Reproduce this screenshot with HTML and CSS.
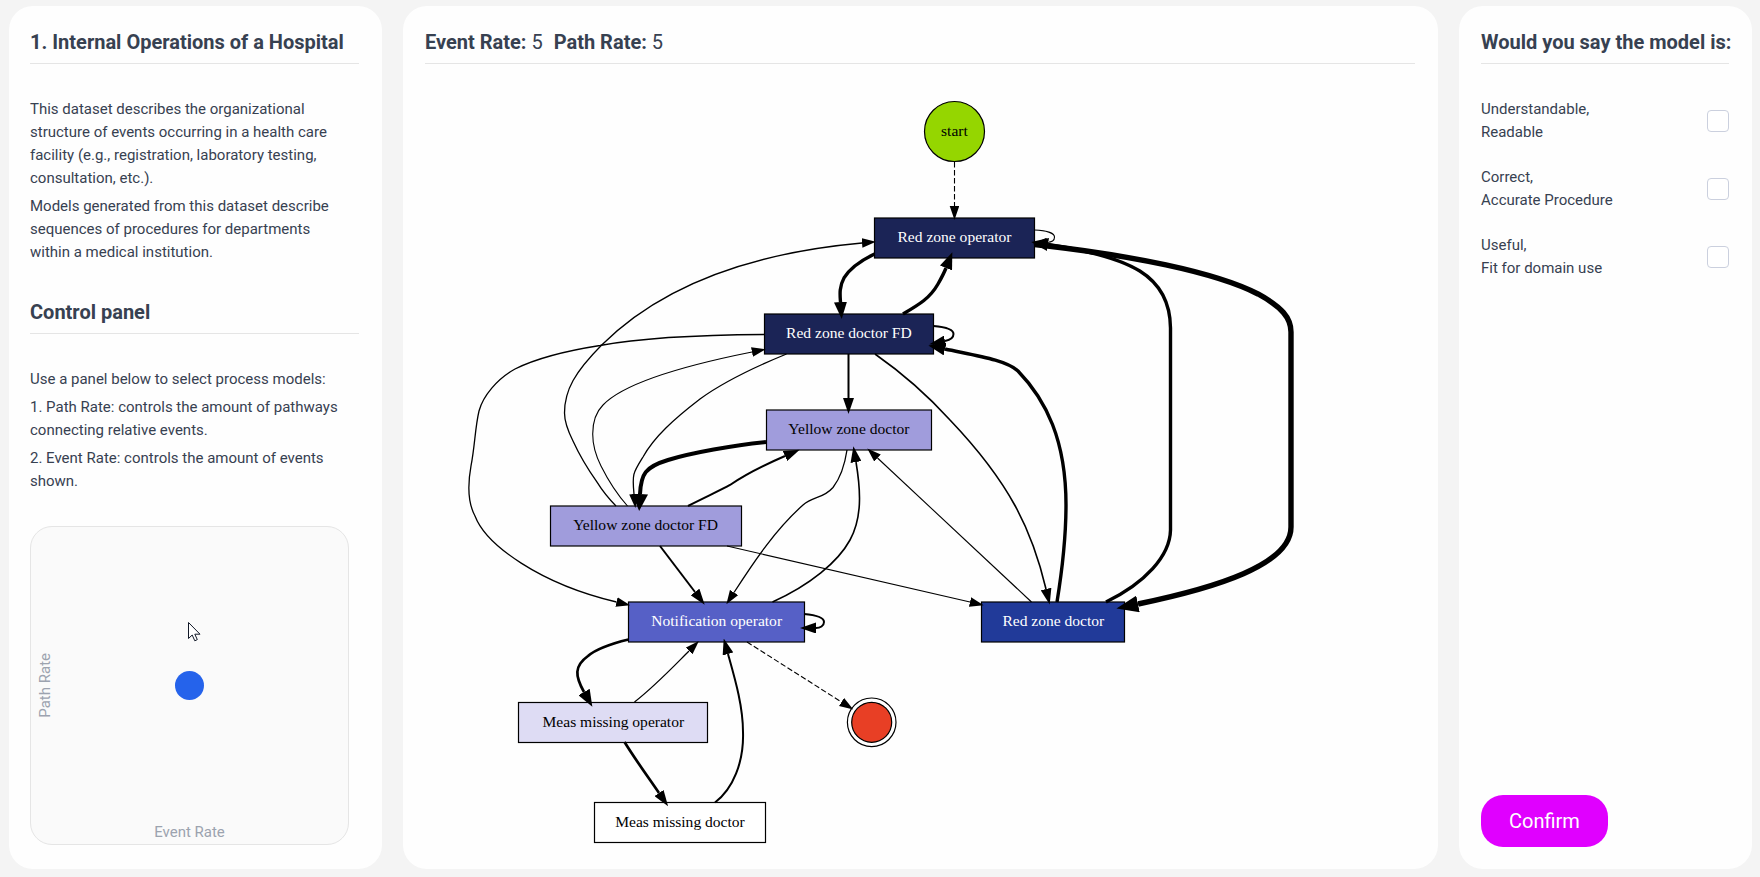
FILE: index.html
```html
<!DOCTYPE html>
<html lang="en">
<head>
<meta charset="utf-8">
<title>Process model survey</title>
<link rel="stylesheet" href="styles.css">
</head>
<body>
<main class="layout">
  <section class="panel">
    <h2 class="panel-title">1. Internal Operations of a Hospital</h2>
    <div class="prose">
      <p>This dataset describes the organizational structure of events occurring in a health care facility (e.g., registration, laboratory testing, consultation, etc.).</p>
      <p>Models generated from this dataset describe sequences of procedures for departments within a medical institution.</p>
    </div>
    <h2 class="panel-title">Control panel</h2>
    <div class="prose">
      <p>Use a panel below to select process models:</p>
      <p>1. Path Rate: controls the amount of pathways connecting relative events.</p>
      <p>2. Event Rate: controls the amount of events shown.</p>
    </div>
    <div class="pad">
      <span class="pad-label pad-label-y">Path Rate</span>
      <button class="pad-handle" type="button" aria-label="Rate selector"></button>
      <span class="pad-label pad-label-x">Event Rate</span>
      <svg class="pointer" viewBox="0 0 13 20" aria-hidden="true"><path d="M.5 .5V16.5L4.2 13L6.8 18.8L9.3 17.6L6.8 12.2H12Z"/></svg>
    </div>
  </section>

  <section class="panel">
    <h2 class="panel-title rates"><span>Event Rate: <span class="rate-value">5</span></span><span>Path Rate: <span class="rate-value">5</span></span></h2>
    <svg class="graph" viewBox="382.5 72 891 688" role="img" aria-label="Process model">
      <defs>
        <marker id="head-s" class="head" markerUnits="userSpaceOnUse" markerWidth="14" markerHeight="10" refX="0" refY="5" orient="auto"><path d="M0 .2L14 5L0 9.8Z"/></marker>
        <marker id="head-m" class="head" markerUnits="userSpaceOnUse" markerWidth="16" markerHeight="11" refX="0" refY="5.5" orient="auto"><path d="M0 0L16 5.5L0 11Z"/></marker>
        <marker id="head-l" class="head" markerUnits="userSpaceOnUse" markerWidth="17" markerHeight="13" refX="0" refY="6.5" orient="auto"><path d="M0 0L17 6.5L0 13Z"/></marker>
        <marker id="head-xl" class="head" markerUnits="userSpaceOnUse" markerWidth="17" markerHeight="16" refX="0" refY="8" orient="auto"><path d="M0 0L17 8L0 16Z"/></marker>
        <marker id="head-xxl" class="head" markerUnits="userSpaceOnUse" markerWidth="22" markerHeight="17" refX="0" refY="8.5" orient="auto"><path d="M0 0L22 8.5L0 17Z"/></marker>
      </defs>
      <g class="shapes" transform="scale(.9)">
        <circle class="start" cx="954.5" cy="131.5" r="30"/>
        <rect class="navy" x="874.5" y="218" width="160" height="40"/>
        <rect class="navy" x="764.5" y="314" width="169" height="40"/>
        <rect class="lilac" x="766.5" y="410" width="165" height="40"/>
        <rect class="lilac" x="550.5" y="506" width="191" height="40"/>
        <rect class="indigo" x="628.5" y="602" width="176" height="40"/>
        <rect class="blue" x="981.5" y="602" width="143" height="40"/>
        <rect class="pale" x="518.5" y="702.5" width="189" height="40"/>
        <rect class="blank" x="594.5" y="802.5" width="171" height="40"/>
        <circle class="blank" cx="871.7" cy="722.3" r="24.3"/>
        <circle class="end" cx="871.7" cy="722.3" r="20"/>
      </g>
      <g class="edges" transform="scale(.9)">
        <g marker-end="url(#head-s)">
          <path class="dashed" d="M954.5 162V206"/>
          <path class="dashed" d="M747 642L841.5 702"/>
          <path d="M1034.5 230C1046 230.5 1054.5 233 1054.5 237C1054.5 241 1052 242 1047 242.5"/>
          <path d="M627.5 506C615 492 608 480 601 466C595 454 592.7 445 592.7 434C592.7 424 595 413 603 405C622 385 672 368 752 352"/>
          <path d="M1031.5 602L877.5 458"/>
          <path d="M727 546L970 602"/>
          <path class="w2" d="M847 450C844 470 838 481 833 487.5C823 499 813 496 803 505C776 529 755 560 734 592.5"/>
          <path class="w2" d="M616 506C606 496 600 487 596.7 481.7C585 465 578 452 573 441C568 431 564.5 423 564.5 413C564.5 390 575 372 601.7 345C650 297 730 255 862 243"/>
          <path class="w2" d="M786.5 354C750 369 722 383 700 399C674 419 654 437 643 457C633 473 632 474 634 494"/>
          <path class="w2" d="M764 334.5C690 335 640 338 600 345.5C565 351 535 359 515 369C497 379 483 396 479 411C475 428 475 445 471 466C467 488 468 503 475 516C486 545 540 584 616.5 602"/>
          <path class="w2" d="M634.5 702C655 686 672 668 689 651"/>
        </g>
        <g marker-end="url(#head-m)">
          <path class="w3" d="M875 354C905 375 930 398 950 420C1010 483 1032 530 1046 589"/>
          <path class="w3" d="M772.5 602C810 585 838 562 850 540C862 518 861 492 856 462"/>
          <path class="w4" d="M848.5 354V398"/>
          <path class="w4" d="M933.5 326C945 327 953.5 329 953.5 334C953.5 338 950 340 945 341"/>
          <path class="w4" d="M688 506C710 495 722 489.5 730 485C743 476 755 469 785 456"/>
          <path class="w4" d="M660 546L695 592"/>
          <path class="w4" d="M804 614C815 615 824 617 824 622C824 626 820 628 816 628"/>
          <path class="w4" d="M715 802.5C733 789 744 762 743 732C743 706 735 679 728 654"/>
          <path class="w5" d="M624.5 742C635 759 648 777 659 793"/>
        </g>
        <g marker-end="url(#head-l)">
          <path class="w5" d="M628.5 639.5C610 644 596 649 588 656C574 666 575 676 584 692"/>
          <path class="w6" d="M874.5 254C862 260 850 268 844 278C839 287 840 295 840.5 302"/>
          <path class="w6" d="M903 314C920 304 930 298 938 284C942 277 944 273 946 268"/>
          <path class="w6" d="M1057 602C1063 565 1066 535 1066 505C1066 440 1046 400 1018 371C1006 360 978 356 945 349"/>
          <path class="w6" d="M1106 602C1145 583 1170 556 1170.5 530V328C1170 275 1130 257 1048 244.5"/>
        </g>
        <path class="w7" marker-end="url(#head-xl)" d="M766 442C735 445 690 453 668 460C645 467 641 474 640 494"/>
        <path class="w8" marker-end="url(#head-xxl)" d="M1034.5 244.5C1130 255 1215 272 1258 294C1282 307 1291 318 1291 332V527C1291 565 1215 588 1138 604"/>
      </g>
      <g class="labels">
        <text x="859" y="122">start</text>
        <text class="light" x="859" y="218">Red zone operator</text>
        <text class="light" x="764" y="304">Red zone doctor FD</text>
        <text x="764" y="391">Yellow zone doctor</text>
        <text x="581" y="477">Yellow zone doctor FD</text>
        <text class="light" x="645" y="563">Notification operator</text>
        <text class="light" x="948" y="563">Red zone doctor</text>
        <text x="552" y="654">Meas missing operator</text>
        <text x="612" y="744">Meas missing doctor</text>
      </g>
    </svg>
  </section>

  <section class="panel">
    <h2 class="panel-title">Would you say the model is:</h2>
    <form class="survey">
      <div class="options">
        <label class="option"><span>Understandable,<br>Readable</span><input class="tick" type="checkbox" name="understandable"></label>
        <label class="option"><span>Correct,<br>Accurate Procedure</span><input class="tick" type="checkbox" name="correct"></label>
        <label class="option"><span>Useful,<br>Fit for domain use</span><input class="tick" type="checkbox" name="useful"></label>
      </div>
      <button class="confirm" type="button">Confirm</button>
    </form>
  </section>
</main>
</body>
</html>
```
FILE: styles.css
```css
* {
  box-sizing: border-box;
}

body {
  margin: 0;
  background: #f4f4f4;
  color: #374151;
  font: 15px/23px Roboto, "Liberation Sans", sans-serif;
}

.layout {
  display: grid;
  grid-template-columns: 373px minmax(0, 1fr) 293px;
  gap: 21px;
  min-height: 100vh;
  padding: 6px 8px 8px 9px;
}

.panel {
  display: flex;
  flex-direction: column;
  padding: 21px 23px 22px 22px;
  border-radius: 24px;
  background: #fefefe;
}

.panel:first-child {
  padding-left: 21px;
}

.panel-title {
  margin: 0 0 34px;
  padding-bottom: 6px;
  border-bottom: 1px solid #e5e5e5;
  font-size: 20px;
  font-weight: 700;
  line-height: 30px;
  white-space: nowrap;
}

.rates {
  display: flex;
  gap: 11px;
}

.rate-value {
  font-weight: 400;
}

.prose {
  display: flex;
  flex-direction: column;
  gap: 5px;
  margin-bottom: 33px;
  padding-right: 10px;
}

.prose p {
  margin: 0;
}

.pad {
  position: relative;
  display: grid;
  place-items: center;
  width: 319px;
  max-width: 100%;
  aspect-ratio: 1;
  border: 1px solid #e5e5e5;
  border-radius: 22px;
  background: #fafafa;
}

.pad-handle {
  width: 29px;
  height: 29px;
  padding: 0;
  border: 0;
  border-radius: 50%;
  background: #2563eb;
}

.pad-label {
  position: absolute;
  color: #9ca3af;
}

.pad-label-y {
  left: 3px;
  writing-mode: vertical-rl;
  transform: rotate(180deg);
}

.pad-label-x {
  bottom: 0;
}

.pointer {
  position: absolute;
  top: 95px;
  left: 157px;
  width: 13px;
  height: 20px;
  fill: #fff;
  stroke: #111827;
}

.graph {
  display: block;
  width: 100%;
  height: auto;
  margin-top: -18px;
}

.shapes {
  stroke: #000;
  stroke-width: 1.2;
}

.start { fill: #95d600; }
.end { fill: #e83f25; }
.navy { fill: #1b2456; }
.lilac { fill: #a09cdc; }
.indigo { fill: #5660c6; }
.blue { fill: #213a99; }
.pale { fill: #dedcf4; }
.blank { fill: #fff; }

.edges {
  fill: none;
  stroke: #000;
  stroke-width: 1.1;
}

.head {
  fill: #000;
  stroke: none;
}

.dashed { stroke-dasharray: 5.5 2.5; }
.w2 { stroke-width: 1.3; }
.w3 { stroke-width: 1.6; }
.w4 { stroke-width: 2; }
.w5 { stroke-width: 2.7; }
.w6 { stroke-width: 3.4; }
.w7 { stroke-width: 4; }
.w8 { stroke-width: 5.4; }

.labels {
  font: 14px "Liberation Serif", serif;
  text-anchor: middle;
}

.light {
  fill: #fff;
}

.survey {
  display: flex;
  flex: 1;
  flex-direction: column;
  justify-content: space-between;
  align-items: flex-start;
}

.options {
  display: grid;
  gap: 22px;
  width: 100%;
}

.option {
  display: flex;
  justify-content: space-between;
  align-items: center;
}

.tick {
  appearance: none;
  width: 22px;
  height: 22px;
  margin: 0;
  border: 1px solid #cbd0de;
  border-radius: 4px;
  background: #fff;
}

.tick:checked {
  background: #2563eb;
}

.confirm {
  padding: 11px 28px;
  border: 0;
  border-radius: 22px;
  background: #e000ff;
  color: #fff;
  font: 20px/30px Roboto, "Liberation Sans", sans-serif;
}
```
